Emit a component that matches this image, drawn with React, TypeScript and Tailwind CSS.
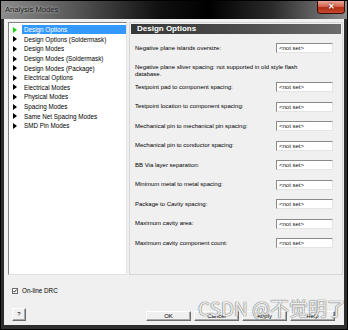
import React from 'react';

const treeItems = [
  'Design Options',
  'Design Options (Soldermask)',
  'Design Modes',
  'Design Modes (Soldermask)',
  'Design Modes (Package)',
  'Electrical Options',
  'Electrical Modes',
  'Physical Modes',
  'Spacing Modes',
  'Same Net Spacing Modes',
  'SMD Pin Modes',
];

const fields = [
  'Testpoint pad to component spacing:',
  'Testpoint location to component spacing:',
  'Mechanical pin to mechanical pin spacing:',
  'Mechanical pin to conductor spacing:',
  'BB Via layer separation:',
  'Minimum metal to metal spacing:',
  'Package to Cavity spacing:',
  'Maximum cavity area:',
  'Maximum cavity component count:',
];

const NotSet = () => (
  <div className="w-[57px] h-[10px] bg-white border border-t-[#8a8a8a] border-l-[#8a8a8a] border-r-[#e4e4e4] border-b-[#e4e4e4] text-[6px] leading-[8px] pl-[2px] text-[#111]">
    &lt;not set&gt;
  </div>
);

const Btn = ({ label, w = 'w-[45px] h-[10px]' }: { label: string; w?: string }) => (
  <div className={`${w} bg-[#f0f0f0] border border-t-white border-l-white border-r-[#6e6e6e] border-b-[#6e6e6e] shadow-[inset_-1px_-1px_0_#a8a8a8] flex items-center justify-center text-[6px] text-black`}>
    {label}
  </div>
);

const App: React.FC = () => {
  return (
    <div className="w-[348px] h-[330px] bg-[#2e2e2e] border border-black flex flex-col font-['Liberation_Sans',Arial,sans-serif] relative overflow-hidden">
      {/* Title bar */}
      <div className="h-[18px] relative bg-[linear-gradient(90deg,#8c8c8c_0%,#5a5a5a_20%,#111_45%,#000_60%,#2a2a2a_78%,#8a8a8a_100%)] flex items-center pl-[4px]">
        <span className="text-[7.6px] text-[#161616] [text-shadow:0_0_3px_#e0e0e0]">Analysis Modes</span>
        <div className="absolute right-[2px] top-[-1px] w-[28px] h-[14px] rounded-b-[3px] border border-[#3a0a05] bg-[linear-gradient(180deg,#e9a89a_0%,#d4644f_45%,#b32d14_55%,#c44a30_100%)] flex items-center justify-center">
          <span className="text-white font-bold text-[8px] leading-none [text-shadow:0_0_2px_#400]">✕</span>
        </div>
      </div>

      {/* Dialog body */}
      <div className="flex-1 mx-[3px] mb-[4px] bg-[#f0f0f0] flex flex-col pl-[4px] pr-[1px] pt-[3px]">
        <div className="flex h-[253px] gap-[2px]">
          {/* Tree */}
          <div className="w-[119px] bg-white border border-t-[#828282] border-l-[#828282] border-r-[#e2e2e2] border-b-[#e2e2e2] pt-[2px] overflow-hidden">
            {treeItems.map((t, i) => (
              <div key={t} className="h-[9.6px] flex items-center">
                <div
                  className={`ml-[4px] w-0 h-0 border-y-[3px] border-y-transparent border-l-[4px] ${
                    i === 0 ? 'border-l-[#16d416]' : 'border-l-black'
                  }`}
                />
                <span
                  className={`ml-[5px] pl-[2px] pr-[2px] text-[6.3px] leading-[9px] whitespace-nowrap ${
                    i === 0 ? 'bg-[#3399ff] text-white flex-1' : 'text-black'
                  }`}
                >
                  {t}
                </span>
              </div>
            ))}
          </div>

          {/* Right panel */}
          <div className="flex-1 border border-[#d6d6d6] bg-[#f0f0f0] flex flex-col">
            <div className="mx-[1px] mt-[1px] h-[10px] bg-[linear-gradient(90deg,#383838_0%,#4a4a4a_50%,#6c6c6c_100%)] flex items-center pl-[6px]">
              <span className="text-white font-bold text-[8px] leading-none">Design Options</span>
            </div>
            <div className="mt-[4.25px] flex flex-col pl-[5px] pr-[9px]">
              <div className="h-[19.5px] flex items-center justify-between">
                <span className="text-[6px] text-black whitespace-nowrap">Negative plane islands oversize:</span>
                <NotSet />
              </div>
              <div className="h-[19.5px] flex items-end">
                <span className="text-[6px] leading-[6.6px] text-black whitespace-nowrap">
                  Negative plane sliver spacing: not supported in old style flash
                  <br />
                  database.
                </span>
              </div>
              {fields.map((f) => (
                <div key={f} className="h-[19.5px] flex items-center justify-between">
                  <span className="text-[6px] text-black whitespace-nowrap">{f}</span>
                  <NotSet />
                </div>
              ))}
            </div>
          </div>
        </div>

        {/* On-line DRC */}
        <div className="mt-[13px] ml-[4px] flex items-center h-[6px]">
          <div className="w-[6px] h-[6px] bg-white border border-[#6a6a6a] flex items-center justify-center">
            <svg width="4" height="4" viewBox="0 0 4 4">
              <path d="M0.4 1.9 L1.5 3.1 L3.6 0.6" stroke="#111" strokeWidth="0.9" fill="none" />
            </svg>
          </div>
          <span className="ml-[4px] text-[6.3px] text-black">On-line DRC</span>
        </div>

        {/* Bottom buttons */}
        <div className="mt-auto mb-[4px] flex items-end pl-[4px] pr-[8px]">
          <Btn label="?" w="w-[14px] h-[13px]" />
          <div className="ml-auto flex gap-[3px]">
            <Btn label="OK" />
            <Btn label="Cancel" />
            <Btn label="Apply" />
            <Btn label="Help" />
          </div>
        </div>
      </div>

      {/* Watermark */}
      <div className="absolute left-[197px] top-[297px] text-[19px] leading-none text-[#ececec] [text-shadow:0_0_1px_#666,0_0_1px_#666] whitespace-nowrap font-['Noto_Sans_CJK_SC','Noto_Sans',sans-serif]">
        CSDN @不觉明了
      </div>
    </div>
  );
};

export default App;
